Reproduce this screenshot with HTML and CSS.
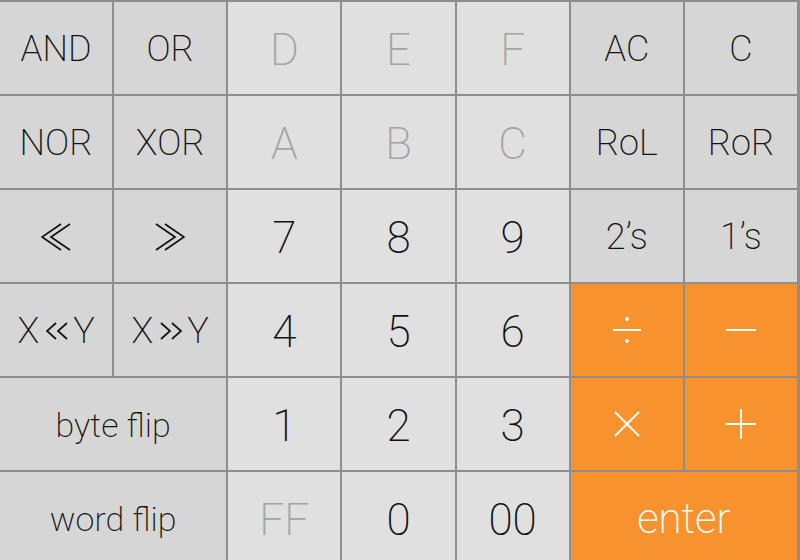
FILE: index.html
```html
<!DOCTYPE html>
<html>
<head>
<meta charset="utf-8">
<link rel="stylesheet" href="styles.css">
</head>
<body>
<div class="pad">
  <div class="key fn">AND</div>
  <div class="key fn">OR</div>
  <div class="key num dim">D</div>
  <div class="key num dim">E</div>
  <div class="key num dim">F</div>
  <div class="key fn">AC</div>
  <div class="key fn">C</div>

  <div class="key fn">NOR</div>
  <div class="key fn">XOR</div>
  <div class="key num dim">A</div>
  <div class="key num dim">B</div>
  <div class="key num dim">C</div>
  <div class="key fn">RoL</div>
  <div class="key fn">RoR</div>

  <div class="key fn"><svg class="chev" width="30" height="28" viewBox="0 0 30 28"><polyline points="20,1 1,14 20,27"/><polyline points="29,1 10,14 29,27"/></svg></div>
  <div class="key fn"><svg class="chev" width="30" height="28" viewBox="0 0 30 28"><polyline points="1,1 20,14 1,27"/><polyline points="10,1 29,14 10,27"/></svg></div>
  <div class="key num">7</div>
  <div class="key num">8</div>
  <div class="key num">9</div>
  <div class="key fn">2’s</div>
  <div class="key fn">1’s</div>

  <div class="key fn">X<svg class="chev small" width="22" height="18" viewBox="0 0 22 18"><polyline points="10,1 1,9 10,17"/><polyline points="21,1 12,9 21,17"/></svg>Y</div>
  <div class="key fn">X<svg class="chev small" width="22" height="18" viewBox="0 0 22 18"><polyline points="1,1 10,9 1,17"/><polyline points="12,1 21,9 12,17"/></svg>Y</div>
  <div class="key num">4</div>
  <div class="key num">5</div>
  <div class="key num">6</div>
  <div class="key op"><svg width="30" height="30" viewBox="0 0 30 30"><line x1="1" y1="15" x2="29" y2="15"/><circle cx="15" cy="4" r="2"/><circle cx="15" cy="26" r="2"/></svg></div>
  <div class="key op"><svg width="32" height="30" viewBox="0 0 32 30"><line x1="1" y1="15" x2="31" y2="15"/></svg></div>

  <div class="key fn wide lower">byte flip</div>
  <div class="key num">1</div>
  <div class="key num">2</div>
  <div class="key num">3</div>
  <div class="key op"><svg width="26" height="26" viewBox="0 0 26 26"><line x1="1" y1="1" x2="25" y2="25"/><line x1="25" y1="1" x2="1" y2="25"/></svg></div>
  <div class="key op"><svg width="32" height="32" viewBox="0 0 32 32"><line x1="1" y1="16" x2="31" y2="16"/><line x1="16" y1="1" x2="16" y2="31"/></svg></div>

  <div class="key fn wide lower">word flip</div>
  <div class="key num dim">FF</div>
  <div class="key num">0</div>
  <div class="key num">00</div>
  <div class="key op wide enter">enter</div>
</div>
</body>
</html>
```

FILE: styles.css
```css
html, body {
  margin: 0;
  padding: 0;
  background: #8e8e8e;
}

body {
  width: 800px;
  height: 560px;
  overflow: hidden;
}

.pad {
  width: 800px;
  height: 566px;
  box-sizing: border-box;
  padding: 2px 3px 0 0;
  display: grid;
  grid-template-columns: repeat(7, 1fr);
  grid-template-rows: repeat(6, 92px);
  gap: 2px;
  background: #8e8e8e;
  font-family: "Roboto", "Liberation Sans", sans-serif;
  font-weight: 200;
  color: #111111;
}

.key {
  display: flex;
  align-items: center;
  justify-content: center;
  line-height: 1;
  box-sizing: border-box;
}

.fn {
  background: #d6d6d6;
  font-size: 36px;
  padding-top: 2px;
}

.fn.lower {
  font-size: 34px;
}

.num {
  background: #e0e0e0;
  font-size: 44px;
  padding-top: 4px;
}

.dim {
  color: #a3a3a3;
}

.op {
  background: #f7932f;
  color: #ffffff;
}

.enter {
  font-size: 42px;
  padding-top: 2px;
}

.wide {
  grid-column: span 2;
}

.op svg line {
  stroke: #ffffff;
  stroke-width: 2;
}

.op svg circle {
  fill: #ffffff;
}

.chev polyline {
  fill: none;
  stroke: #111111;
  stroke-width: 1.7;
}

.chev.small {
  margin: 0 5px 0 7px;
}
```
